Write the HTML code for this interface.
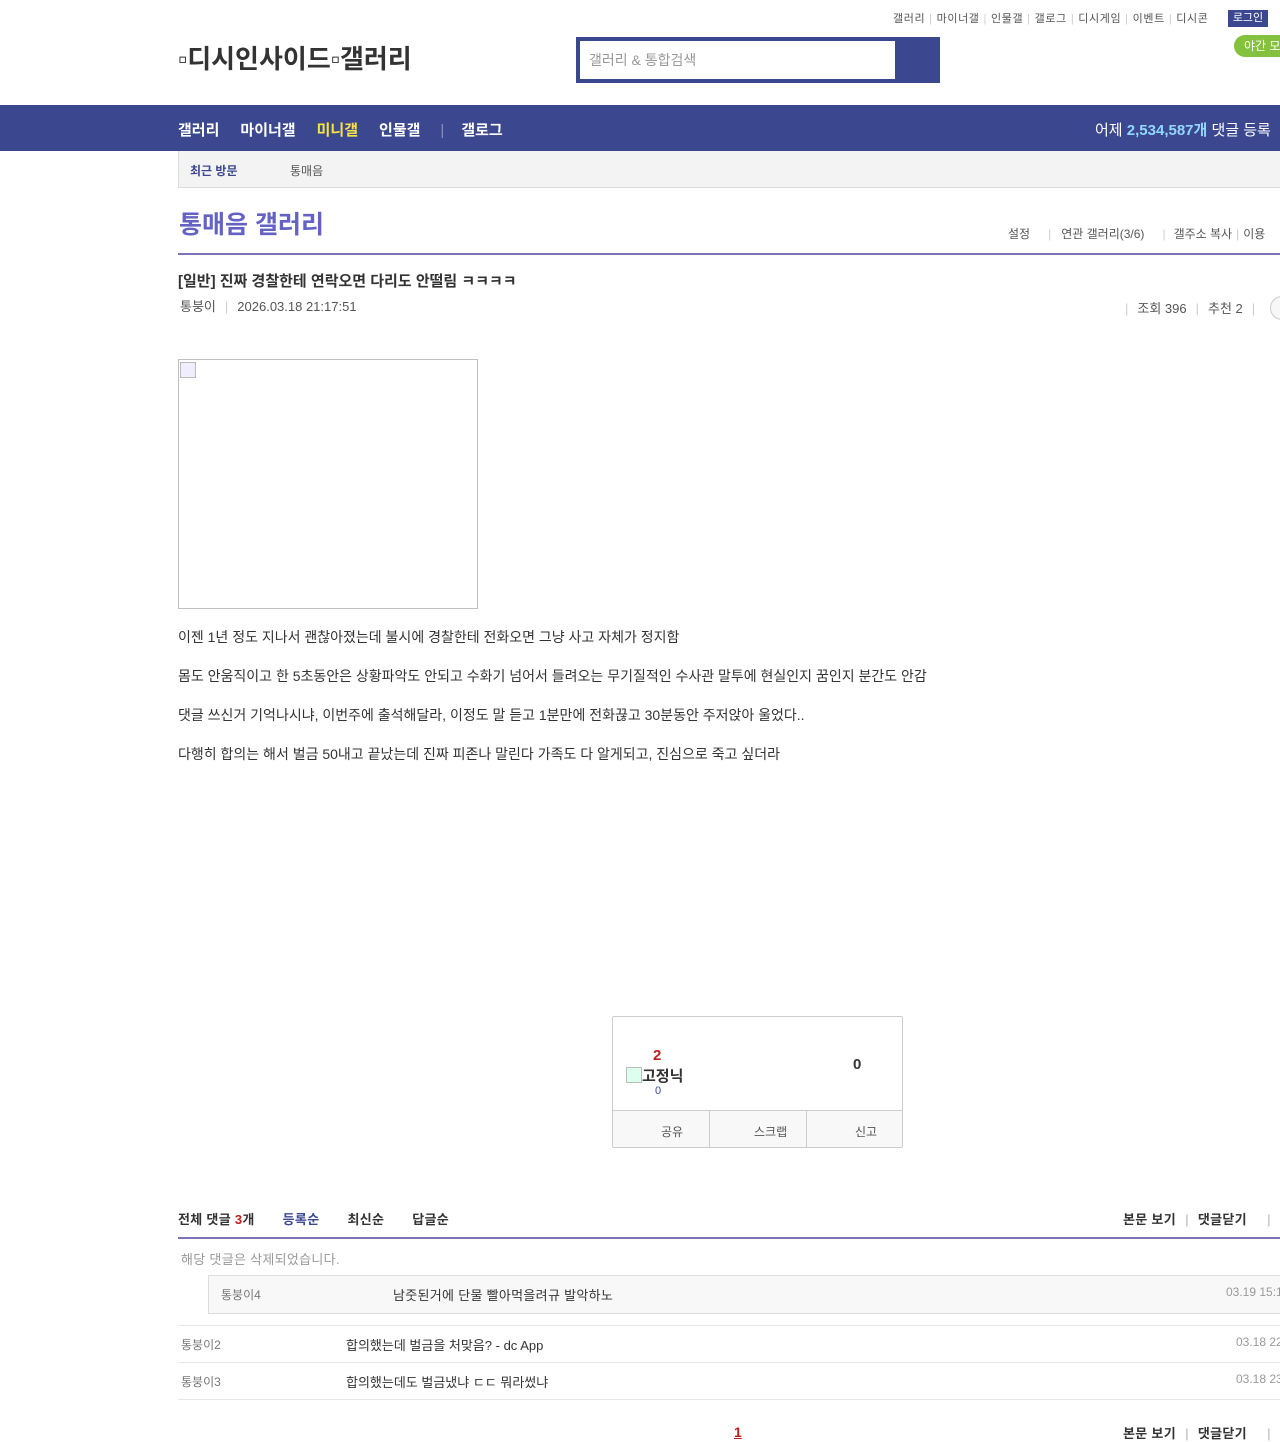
<!DOCTYPE html>
<html><head><meta charset="utf-8">
<style>
body{margin:0;width:1280px;height:1440px;overflow:hidden;position:relative;background:#fff;font-family:"Liberation Sans","Noto Sans CJK KR",sans-serif;color:#333}
.a{position:absolute;white-space:nowrap}
.sep{color:#ccc;margin:0 4px}
</style></head><body>
<div class="a" style="left:893px;top:10px;font-size:11px;color:#555;letter-spacing:0.6px">갤러리<span class="sep">|</span>마이너갤<span class="sep">|</span>인물갤<span class="sep">|</span>갤로그<span class="sep">|</span>디시게임<span class="sep">|</span>이벤트<span class="sep">|</span>디시콘</div>
<div class="a" style="left:1228px;top:10px;width:40px;height:17px;background:#3b4890;color:#fff;font-size:11px;text-align:center;line-height:17px">로그인</div>
<div class="a" style="left:1234px;top:35px;width:60px;height:22px;background:#84c13c;border-radius:11px;color:#fff;font-size:12px;line-height:22px;padding-left:10px">야간 모드</div>
<div class="a" style="left:178px;top:39px;font-size:26px;font-weight:bold;color:#333">▫디시인사이드▫갤러리</div>
<div class="a" style="left:576px;top:37px;width:364px;height:46px;background:#3b4890"></div>
<div class="a" style="left:580px;top:41px;width:315px;height:38px;background:#fff;font-size:14px;color:#999;line-height:38px;text-indent:9px">갤러리 &amp; 통합검색</div>
<div class="a" style="left:0;top:105px;width:1280px;height:46px;background:#3b4890"></div>
<div class="a" style="left:178px;top:119px;font-size:15px;font-weight:bold;color:#fff">갤러리<span style="margin-left:21px">마이너갤</span><span style="margin-left:21px;color:#f9e341">미니갤</span><span style="margin-left:21px">인물갤</span><span style="margin-left:20px;color:#8890c0;font-weight:normal">|</span><span style="margin-left:17px">갤로그</span></div>
<div class="a" style="left:1095px;top:119px;font-size:15px;color:#fff">어제 <b style="color:#90d8ff">2,534,587개</b> 댓글 등록</div>
<div class="a" style="left:178px;top:151px;width:1110px;height:36px;background:#f3f3f3;border:1px solid #ddd;border-top:none"></div>
<div class="a" style="left:190px;top:162px;font-size:12px;color:#3b4890;font-weight:bold">최근 방문</div>
<div class="a" style="left:290px;top:162px;font-size:12px;color:#555">통매음</div>
<div class="a" style="left:179px;top:205px;font-size:25px;font-weight:bold;color:#6462c4">통매음 갤러리</div>
<div class="a" style="left:1008px;top:225px;font-size:12px;color:#555">설정<span class="sep" style="margin:0 10px 0 18px">|</span>연관 갤러리(3/6)<span class="sep" style="margin:0 8px 0 18px">|</span>갤주소 복사<span class="sep">|</span>이용</div>
<div class="a" style="left:178px;top:253px;width:1110px;height:2px;background:#7b74b8"></div>
<div class="a" style="left:178px;top:270px;font-size:15px;font-weight:bold;color:#333">[일반] 진짜 경찰한테 연락오면 다리도 안떨림 ㅋㅋㅋㅋ</div>
<div class="a" style="left:180px;top:296px;font-size:13px;color:#555">통붕이<span class="sep" style="margin:0 9px">|</span>2026.03.18 21:17:51</div>
<div class="a" style="left:1125px;top:298px;font-size:13px;color:#555"><span class="sep" style="margin:0 9px 0 0">|</span>조회 396<span class="sep" style="margin:0 9px">|</span>추천 2<span class="sep" style="margin:0 9px">|</span></div>
<div class="a" style="left:1270px;top:296px;width:22px;height:22px;border:1px solid #ccc;border-radius:12px;background:#f7f7f7"></div>
<div class="a" style="left:178px;top:359px;width:298px;height:248px;border:1px solid #c0c0c0"></div>
<div class="a" style="left:180px;top:362px;width:14px;height:14px;border:1px solid #bbb;background:#eef"></div>
<div class="a" style="left:178px;top:618px;font-size:14px;color:#333;line-height:39px">이젠 1년 정도 지나서 괜찮아졌는데 불시에 경찰한테 전화오면 그냥 사고 자체가 정지함<br>몸도 안움직이고 한 5초동안은 상황파악도 안되고 수화기 넘어서 들려오는 무기질적인 수사관 말투에 현실인지 꿈인지 분간도 안감<br>댓글 쓰신거 기억나시냐, 이번주에 출석해달라, 이정도 말 듣고 1분만에 전화끊고 30분동안 주저앉아 울었다..<br>다행히 합의는 해서 벌금 50내고 끝났는데 진짜 피존나 말린다 가족도 다 알게되고, 진심으로 죽고 싶더라</div>
<div class="a" style="left:612px;top:1016px;width:289px;height:130px;border:1px solid #ccc;border-radius:2px;overflow:hidden">
 <div style="position:absolute;left:0;top:93px;width:289px;height:37px;background:#f8f8f8;border-top:1px solid #ccc"></div>
 <div style="position:absolute;left:96px;top:93px;width:1px;height:37px;background:#ccc"></div>
 <div style="position:absolute;left:193px;top:93px;width:1px;height:37px;background:#ccc"></div>
</div>
<div class="a" style="left:653px;top:1047px;font-size:15px;font-weight:bold;color:#c31b1b">2</div>
<div class="a" style="left:626px;top:1065px;font-size:15px;font-weight:bold;color:#333"><span style="display:inline-block;width:14px;height:14px;border:1px solid #bbb;background:#dfe;vertical-align:-2px"></span>고정닉</div>
<div class="a" style="left:655px;top:1085px;font-size:11px;color:#3b4890">0</div>
<div class="a" style="left:853px;top:1056px;font-size:15px;font-weight:bold;color:#333">0</div>
<div class="a" style="left:661px;top:1123px;font-size:12px;color:#555">공유</div>
<div class="a" style="left:754px;top:1123px;font-size:12px;color:#555">스크랩</div>
<div class="a" style="left:855px;top:1123px;font-size:12px;color:#555">신고</div>
<div class="a" style="left:178px;top:1209px;font-size:13px;font-weight:bold;color:#333;letter-spacing:0.3px">전체 댓글 <span style="color:#c31b1b">3</span>개<span style="margin-left:28px;color:#3b4890">등록순</span><span style="margin-left:28px">최신순</span><span style="margin-left:28px">답글순</span></div>
<div class="a" style="left:1123px;top:1209px;font-size:13px;font-weight:bold;color:#333;letter-spacing:0.3px">본문 보기<span class="sep" style="margin:0 9px">|</span>댓글닫기<span class="sep" style="margin-left:20px">|</span></div>
<div class="a" style="left:178px;top:1237px;width:1110px;height:2px;background:#7b74b8"></div>
<div class="a" style="left:181px;top:1249px;font-size:13px;color:#999;letter-spacing:0.3px">해당 댓글은 삭제되었습니다.</div>
<div class="a" style="left:208px;top:1275px;width:1080px;height:37px;background:#f8f8f8;border:1px solid #ddd"></div>
<div class="a" style="left:221px;top:1286px;font-size:12px;color:#777">통붕이4</div>
<div class="a" style="left:393px;top:1285px;font-size:13px;color:#333;letter-spacing:0.3px">남줏된거에 단물 빨아먹을려규 발악하노</div>
<div class="a" style="left:1226px;top:1285px;font-size:12px;color:#999">03.19 15:12</div>
<div class="a" style="left:178px;top:1325px;width:1110px;height:1px;background:#e6e6e6"></div>
<div class="a" style="left:181px;top:1336px;font-size:12px;color:#777">통붕이2</div>
<div class="a" style="left:346px;top:1335px;font-size:13px;color:#333">합의했는데 벌금을 처맞음? - dc App</div>
<div class="a" style="left:1236px;top:1335px;font-size:12px;color:#999">03.18 22:</div>
<div class="a" style="left:178px;top:1362px;width:1110px;height:1px;background:#e6e6e6"></div>
<div class="a" style="left:181px;top:1373px;font-size:12px;color:#777">통붕이3</div>
<div class="a" style="left:346px;top:1372px;font-size:13px;color:#333">합의했는데도 벌금냈냐 ㄷㄷ 뭐라썼냐</div>
<div class="a" style="left:1236px;top:1372px;font-size:12px;color:#999">03.18 23:</div>
<div class="a" style="left:178px;top:1399px;width:1110px;height:1px;background:#e6e6e6"></div>
<div class="a" style="left:734px;top:1424px;font-size:14px;font-weight:bold;color:#c31b1b;text-decoration:underline">1</div>
<div class="a" style="left:1123px;top:1423px;font-size:13px;font-weight:bold;color:#333;letter-spacing:0.3px">본문 보기<span class="sep" style="margin:0 9px">|</span>댓글닫기<span class="sep" style="margin-left:20px">|</span></div>
</body></html>
